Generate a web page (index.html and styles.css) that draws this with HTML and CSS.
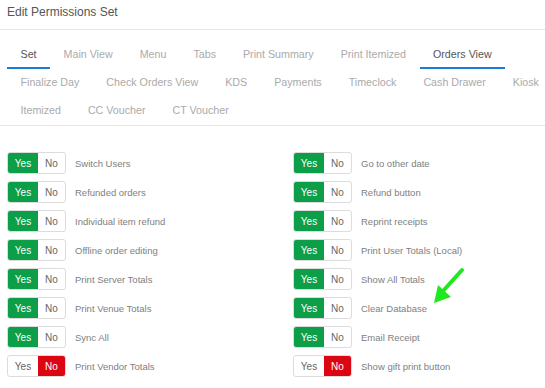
FILE: index.html
```html
<!DOCTYPE html>
<html lang="en">
<head>
  <meta charset="UTF-8">
  <meta name="viewport" content="width=device-width, initial-scale=1.0">
  <title>Edit Permissions Set</title>
  <link rel="stylesheet" href="styles.css">
</head>
<body>
  <div class="panel">
    <div class="panel-title">Edit Permissions Set</div>

    <div class="tabs">
      <div class="tab-row">
        <span class="tab active">Set</span>
        <span class="tab">Main View</span>
        <span class="tab">Menu</span>
        <span class="tab">Tabs</span>
        <span class="tab">Print Summary</span>
        <span class="tab">Print Itemized</span>
        <span class="tab active">Orders View</span>
      </div>
      <div class="tab-row">
        <span class="tab">Finalize Day</span>
        <span class="tab">Check Orders View</span>
        <span class="tab">KDS</span>
        <span class="tab">Payments</span>
        <span class="tab">Timeclock</span>
        <span class="tab">Cash Drawer</span>
        <span class="tab">Kiosk</span>
      </div>
      <div class="tab-row">
        <span class="tab">Itemized</span>
        <span class="tab">CC Voucher</span>
        <span class="tab">CT Voucher</span>
      </div>
    </div>

    <div class="perms">
      <div class="perm"><div class="toggle"><span class="yes on">Yes</span><span class="no">No</span></div><span class="label">Switch Users</span></div>
      <div class="perm"><div class="toggle"><span class="yes on">Yes</span><span class="no">No</span></div><span class="label">Go to other date</span></div>

      <div class="perm"><div class="toggle"><span class="yes on">Yes</span><span class="no">No</span></div><span class="label">Refunded orders</span></div>
      <div class="perm"><div class="toggle"><span class="yes on">Yes</span><span class="no">No</span></div><span class="label">Refund button</span></div>

      <div class="perm"><div class="toggle"><span class="yes on">Yes</span><span class="no">No</span></div><span class="label">Individual item refund</span></div>
      <div class="perm"><div class="toggle"><span class="yes on">Yes</span><span class="no">No</span></div><span class="label">Reprint receipts</span></div>

      <div class="perm"><div class="toggle"><span class="yes on">Yes</span><span class="no">No</span></div><span class="label">Offline order editing</span></div>
      <div class="perm"><div class="toggle"><span class="yes on">Yes</span><span class="no">No</span></div><span class="label">Print User Totals (Local)</span></div>

      <div class="perm"><div class="toggle"><span class="yes on">Yes</span><span class="no">No</span></div><span class="label">Print Server Totals</span></div>
      <div class="perm"><div class="toggle"><span class="yes on">Yes</span><span class="no">No</span></div><span class="label">Show All Totals</span></div>

      <div class="perm"><div class="toggle"><span class="yes on">Yes</span><span class="no">No</span></div><span class="label">Print Venue Totals</span></div>
      <div class="perm"><div class="toggle"><span class="yes on">Yes</span><span class="no">No</span></div><span class="label">Clear Database</span></div>

      <div class="perm"><div class="toggle"><span class="yes on">Yes</span><span class="no">No</span></div><span class="label">Sync All</span></div>
      <div class="perm"><div class="toggle"><span class="yes on">Yes</span><span class="no">No</span></div><span class="label">Email Receipt</span></div>

      <div class="perm"><div class="toggle"><span class="yes">Yes</span><span class="no on">No</span></div><span class="label">Print Vendor Totals</span></div>
      <div class="perm"><div class="toggle"><span class="yes">Yes</span><span class="no on">No</span></div><span class="label">Show gift print button</span></div>
    </div>

    <svg class="arrow" width="40" height="44" viewBox="0 0 40 44">
      <line x1="31" y1="3" x2="12" y2="24" stroke="#1ee81e" stroke-width="4" stroke-linecap="round"/>
      <polygon points="3,36 7,18 20,30" fill="#1ee81e"/>
    </svg>
  </div>
</body>
</html>
```

FILE: styles.css
```css
body {
  margin: 0;
  font-family: 'Liberation Sans', Arial, sans-serif;
  background: #ffffff;
  color: #777;
}

.panel {
  position: relative;
  width: 545px;
  height: 388px;
  overflow: hidden;
}

.panel-title {
  height: 29px;
  line-height: 24px;
  padding: 0 7px;
  font-size: 12px;
  color: #555;
  border-bottom: 1px solid #e6e6e6;
}

.tabs {
  margin-top: 11px;
  padding: 0 7px;
  border-bottom: 1px solid #e6e6e6;
}

.tab-row {
  display: flex;
  white-space: nowrap;
}

.tab {
  height: 26px;
  line-height: 26px;
  padding: 0 13.5px;
  font-size: 10.7px;
  color: #aaa;
  border-bottom: 2px solid transparent;
}

.tab.active {
  color: #555;
  border-bottom-color: #1a7fd4;
}

.perms {
  display: grid;
  grid-template-columns: 286px 1fr;
  row-gap: 7px;
  padding: 26px 7px 0;
}

.perm {
  display: flex;
  align-items: center;
  gap: 9px;
}

.toggle {
  display: flex;
  height: 22px;
  width: 59px;
  border: 1px solid #dcdcdc;
  border-radius: 3px;
  overflow: hidden;
  box-sizing: border-box;
  font-size: 10px;
}

.toggle span {
  display: flex;
  align-items: center;
  justify-content: center;
  color: #666;
}

.toggle .yes {
  width: 30px;
}

.toggle .no {
  flex: 1;
}

.toggle .yes.on {
  background: #0c9e48;
  color: #fff;
}

.toggle .no.on {
  background: #dc0612;
  color: #fff;
}

.label {
  font-size: 9.5px;
  color: #808080;
}

.arrow {
  position: absolute;
  left: 431px;
  top: 267px;
}
```
